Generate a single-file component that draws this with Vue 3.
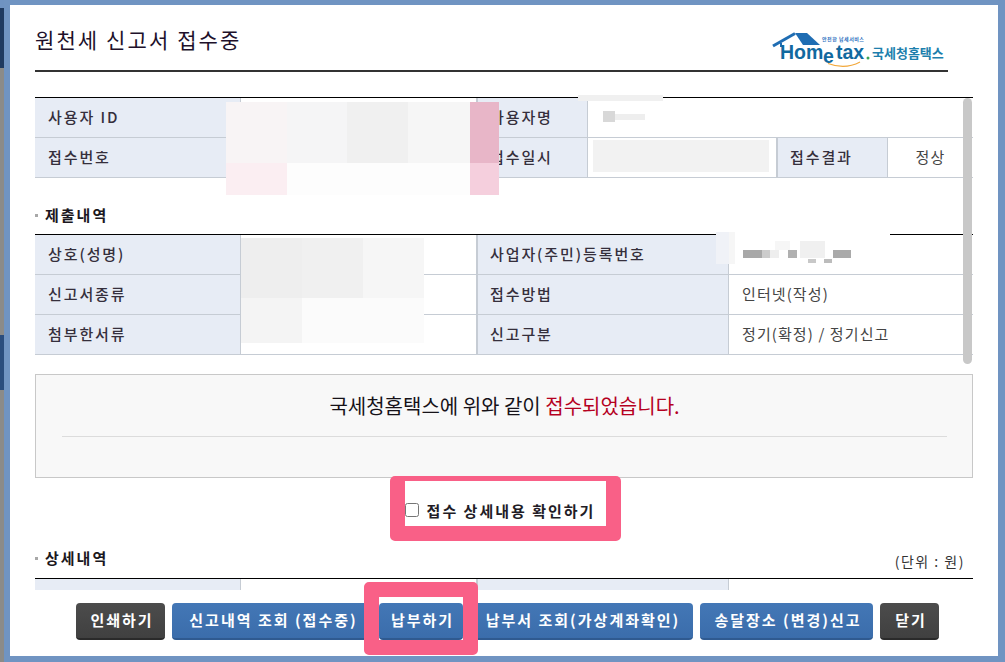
<script setup>
const patches = [
  [226, 102, 61, 61, '#f8f4f5'], [226, 163, 61, 32, '#fbeef2'],
  [287, 102, 60, 61, '#f5f5f6'], [347, 102, 61, 61, '#f0f0f0'], [408, 102, 62, 61, '#f6f6f6'],
  [287, 163, 183, 32, '#fdfdfd'],
  [470, 102, 29, 61, '#e8b6c8'], [470, 163, 29, 32, '#f5cfdd'],
  [578, 95, 85, 6, '#f0f0f0'], [593, 140, 176, 32, '#f2f2f2'],
  [603, 111, 12, 11, '#d8d8d8'], [615, 114, 30, 6, '#eeeeee'],
  [241, 238, 61, 60, '#eeeeee'], [302, 238, 61, 60, '#f0f0f0'], [363, 238, 61, 60, '#f6f6f6'],
  [241, 298, 61, 45, '#f4f4f4'], [302, 298, 61, 45, '#fbfbfb'], [363, 298, 61, 45, '#fbfbfb'],
  [716, 232, 174, 4, '#ffffff'], [716, 232, 13, 32, '#f0f2f7'], [729, 232, 6, 32, '#f6f6f6'],
  [775, 241, 15, 9, '#f6f6f6'], [800, 241, 25, 17, '#f0f0f0'],
  [743, 250, 19, 8, '#a8a8a8'], [762, 250, 8, 8, '#cccccc'], [770, 250, 9, 8, '#eeeeee'],
  [788, 250, 9, 8, '#b0b0b0'], [808, 259, 8, 4, '#c8c8c8'], [824, 259, 8, 4, '#bcbcbc'],
  [833, 250, 18, 8, '#aaaaaa']
]
const patchStyle = ([x, y, w, h, c]) => ({
  left: x + 'px', top: y + 'px', width: w + 'px', height: h + 'px', background: c
})
</script>

<template>
  <div class="page">
    <div class="dialog">
      <header class="head">
        <h1 class="title">원천세 신고서 접수중</h1>
        <svg class="logo" viewBox="770 30 180 40" width="180" height="40">
          <path d="M773 46 L795 33.500" stroke="#1f6db3" stroke-width="3" fill="none" />
          <path d="M781 43 V47" stroke="#1f6db3" stroke-width="2" fill="none" />
          <path d="M795 33 H807 L820 45 H803 Z" fill="#1f6db3" />
          <text x="780" y="59" class="lg-main">Hom</text>
          <text x="823" y="63" class="lg-main">e</text>
          <text x="836" y="59" class="lg-main">tax</text>
          <circle cx="868" cy="58" r="1.500" fill="#3aa655" />
          <path d="M828 63.500 Q845 70 860 62" stroke="#f2a83b" stroke-width="1.200" fill="none" />
          <text x="822" y="41" class="lg-small">안전한 납세서비스</text>
          <text x="872" y="58" class="lg-kr">국세청홈택스</text>
        </svg>
      </header>

      <table class="grid first">
        <colgroup>
          <col class="c206" /><col class="c235" /><col class="c112" /><col class="c188" /><col class="c112" /><col />
        </colgroup>
        <tbody>
          <tr>
            <th>사용자 ID</th><td></td>
            <th class="mid">사용자명</th><td colspan="3"></td>
          </tr>
          <tr>
            <th>접수번호</th><td></td>
            <th class="mid">접수일시</th><td></td>
            <th class="mid">접수결과</th><td class="center">정상</td>
          </tr>
        </tbody>
      </table>

      <div class="sec sec-one"><h2 class="sec-title">제출내역</h2></div>

      <table class="grid">
        <colgroup>
          <col class="c206" /><col class="c235" /><col class="c253" /><col />
        </colgroup>
        <tbody>
          <tr><th>상호(성명)</th><td></td><th class="mid">사업자(주민)등록번호</th><td></td></tr>
          <tr><th>신고서종류</th><td></td><th class="mid">접수방법</th><td>인터넷(작성)</td></tr>
          <tr><th>첨부한서류</th><td></td><th class="mid">신고구분</th><td>정기(확정) / 정기신고</td></tr>
        </tbody>
      </table>

      <div class="msg">
        <p class="msg-text">국세청홈택스에 위와 같이 <em>접수되었습니다.</em></p>
        <div class="msg-line"></div>
      </div>

      <label class="check">
        <input type="checkbox" />
        <span>접수 상세내용 확인하기</span>
      </label>

      <div class="sec sec-two">
        <h2 class="sec-title">상세내역</h2>
        <span class="unit">(단위 : 원)</span>
      </div>

      <div class="clip">
        <table class="grid">
          <colgroup>
            <col class="c206" /><col class="c235" /><col class="c253" /><col />
          </colgroup>
          <tbody>
            <tr><th></th><td></td><th class="mid"></th><td></td></tr>
          </tbody>
        </table>
      </div>

      <footer class="btns">
        <button class="btn dark">인쇄하기</button>
        <button class="btn">신고내역 조회 (접수중)</button>
        <button class="btn">납부하기</button>
        <button class="btn">납부서 조회(가상계좌확인)</button>
        <button class="btn">송달장소 (변경)신고</button>
        <button class="btn dark">닫기</button>
      </footer>
    </div>

    <div class="thumb"></div>
    <div v-for="(p, i) in patches" :key="i" class="patch" :style="patchStyle(p)"></div>
    <div class="mark mark-check"></div>
    <div class="mark mark-pay"></div>
  </div>
</template>

<style>
html, body { margin: 0; padding: 0; }
</style>

<style scoped>
.page {
  position: relative;
  width: 1005px;
  height: 662px;
  overflow: hidden;
  box-sizing: border-box;
  padding: 5px 7px 6px 10px;
  font-family: "Noto Sans CJK KR", "Noto Sans", sans-serif;
  color: #333;
  background:
    linear-gradient(#6f93c2 0 8px, #1f3a60 8px 68px, #8b8b89 68px 335px, #2a4d7d 335px 390px, #8b8b89 390px) 0 0 / 4px 100% no-repeat,
    #7094c2;
}
.dialog {
  height: 651px;
  box-sizing: border-box;
  padding: 0 25px;
  background: #fff;
}
.head {
  width: 913px;
  height: 67px;
  box-sizing: border-box;
  display: flex;
  justify-content: space-between;
  align-items: flex-end;
  border-bottom: 2px solid #333;
}
.title {
  margin: 0 0 17px;
  font-size: 21px;
  line-height: 28px;
  font-weight: 400;
  letter-spacing: 2.1px;
  color: #20102a;
}
.logo { display: block; margin-right: -2px; }
.lg-main { font: 700 19.5px "Liberation Sans", sans-serif; fill: #11699f; }
.lg-small { font: 700 5px "Noto Sans CJK KR", sans-serif; fill: #2b6fc0; letter-spacing: 0.5px; }
.lg-kr { font: 700 13px "Noto Sans CJK KR", sans-serif; fill: #1d7fad; }

.grid {
  width: 938px;
  table-layout: fixed;
  border-collapse: separate;
  border-spacing: 0;
  border-top: 1px solid #000;
  font-size: 15px;
}
.first { margin-top: 25px; }
.c206 { width: 206px; }
.c235 { width: 235px; }
.c253 { width: 253px; }
.c112 { width: 112px; }
.c188 { width: 188px; }
.grid th, .grid td {
  box-sizing: border-box;
  height: 40px;
  padding: 0 0 3px 13px;
  border-bottom: 1px solid #c6ccd4;
  text-align: left;
  letter-spacing: 1.9px;
}
.grid th {
  background: #e7ecf5;
  font-weight: 500;
  color: #352f3c;
  border-right: 1px solid #c6ccd4;
}
.grid th.mid { border-left: 2px solid #c6ccd4; padding-left: 12px; }
.grid td { color: #444; letter-spacing: 1.1px; }
.grid td.center { text-align: center; padding: 0 0 3px; }

.sec {
  display: flex;
  justify-content: space-between;
  align-items: flex-end;
  padding-right: 8px;
}
.sec-one { height: 56px; padding-bottom: 9px; box-sizing: border-box; }
.sec-two { height: 36px; padding-bottom: 10px; box-sizing: border-box; }
.sec-title {
  margin: 0;
  padding-left: 10px;
  position: relative;
  font-size: 15px;
  line-height: 20px;
  font-weight: 700;
  letter-spacing: 2px;
  color: #1b1720;
}
.sec-title::before {
  content: "";
  position: absolute;
  left: 0;
  top: 9px;
  width: 3px;
  height: 3px;
  background: #a8a8a8;
}
.unit {
  font-size: 14px;
  line-height: 20px;
  letter-spacing: 1.5px;
  color: #333;
  position: relative;
  top: 3px;
}

.msg {
  margin-top: 19px;
  height: 104px;
  box-sizing: border-box;
  padding: 0 25px 0 26px;
  background: #f8f8f8;
  border: 1px solid #c8c8c8;
}
.msg-text {
  margin: 0;
  height: 61px;
  line-height: 61px;
  text-align: center;
  font-size: 20px;
  color: #161218;
}
.msg-text em { font-style: normal; color: #b5001f; }
.msg-line { height: 1px; background: #dcdcdc; }

.check {
  height: 64px;
  display: flex;
  align-items: center;
  justify-content: center;
  gap: 8px;
  padding-right: 8px;
  font-size: 15px;
  font-weight: 700;
  letter-spacing: 2px;
  color: #221c26;
}
.check input { width: 14px; height: 14px; margin: 0; }

.clip { height: 12px; overflow: hidden; }

.btns {
  margin: 13px 0 0 41px;
  display: grid;
  grid-template-columns: 89px 200px 84px 223px 173px 59px;
  column-gap: 7px;
  height: 37px;
}
.btn {
  padding: 0 0 2px 3px;
  border: 0;
  border-bottom: 2px solid #2f5a90;
  border-radius: 4px;
  background: linear-gradient(#4377b6, #3b6dab);
  color: #fff;
  font-family: inherit;
  font-size: 15px;
  font-weight: 700;
  letter-spacing: 2px;
  white-space: nowrap;
}
.btn.dark { background: linear-gradient(#4c4c4c, #404040); border-bottom-color: #2a2a2a; }

.thumb {
  position: absolute;
  left: 963px;
  top: 98px;
  width: 9px;
  height: 266px;
  border-radius: 5px;
  background: #c8c8c8;
}
.patch { position: absolute; }
.mark {
  position: absolute;
  box-sizing: border-box;
  border-style: solid;
  border-color: #f96087;
  border-radius: 5px;
}
.mark-check {
  left: 390px;
  top: 476px;
  width: 231px;
  height: 65px;
  border-width: 5px 15px 15px;
}
.mark-pay {
  left: 364px;
  top: 582px;
  width: 114px;
  height: 73px;
  border-width: 15px;
}
</style>
